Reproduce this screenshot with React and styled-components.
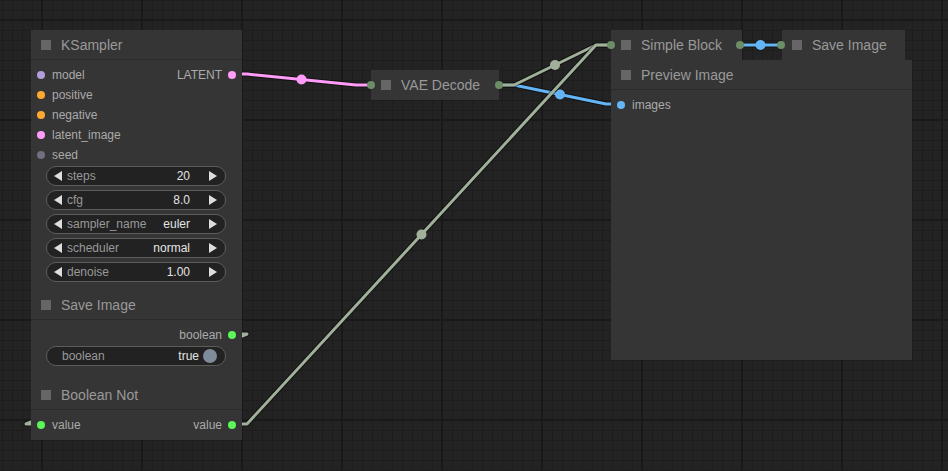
import React from 'react'
import styled, { createGlobalStyle } from 'styled-components'

const GlobalStyle = createGlobalStyle`
  html, body {
    margin: 0;
    padding: 0;
    background: #232323;
    font-family: "Liberation Sans", Arial, sans-serif;
  }
`

const LINK_GREY = '#a0b09a'

const Canvas = styled.div`
  position: relative;
  width: 948px;
  height: 471px;
  overflow: hidden;
  background-color: #232323;
  background-image:
    linear-gradient(to right, #191919 2px, transparent 2px),
    linear-gradient(to bottom, #191919 2px, transparent 2px),
    linear-gradient(to right, #1d1d1d 1px, transparent 1px),
    linear-gradient(to bottom, #1d1d1d 1px, transparent 1px);
  background-size: 100px 100px, 100px 100px, 10px 10px, 10px 10px;
  background-position: 41px 0, 0 19px, 2px 0, 0 0;
`

const LinkLayer = styled.svg`
  position: absolute;
  left: 0;
  top: 0;
  width: 948px;
  height: 471px;
`

const Node = styled.div`
  position: absolute;
  left: ${({ $x }) => $x}px;
  top: ${({ $y }) => $y}px;
  width: ${({ $w }) => $w}px;
  height: ${({ $h }) => $h}px;
  background: #353535;
  display: flex;
  flex-direction: column;
  box-sizing: border-box;
`

const Title = styled.div`
  height: 30px;
  flex-shrink: 0;
  box-sizing: border-box;
  display: flex;
  align-items: center;
  gap: 10px;
  padding-left: 10px;
  font-size: 14px;
  color: #999;
  white-space: nowrap;
  border-bottom: ${({ $collapsed }) => ($collapsed ? 'none' : '1px solid #2b2b2b')};
`

const TitleBox = styled.span`
  width: 10px;
  height: 10px;
  background: #666;
  flex-shrink: 0;
`

const Body = styled.div`
  display: flex;
  flex-direction: column;
  padding-top: 5px;
`

const SlotRow = styled.div`
  height: 20px;
  display: flex;
  align-items: center;
  justify-content: space-between;
  padding: 0 6px;
  font-size: 12px;
  color: #aaa;
`

const Slot = styled.div`
  display: flex;
  align-items: center;
  gap: ${({ $out }) => ($out ? '6px' : '7px')};
`

const Dot = styled.span`
  width: 8px;
  height: 8px;
  border-radius: 50%;
  background: ${({ $color }) => $color};
  flex-shrink: 0;
`

const EdgeDot = styled(Dot)`
  position: absolute;
  top: 11px;
  ${({ $side, $off }) => `${$side}: ${$off}px;`}
`

const WidgetList = styled.div`
  display: flex;
  flex-direction: column;
  gap: 4px;
  margin-top: 1px;
  padding-left: 15px;
`

const Widget = styled.div`
  width: 180px;
  height: 20px;
  box-sizing: border-box;
  border: 1px solid #5c5c5c;
  border-radius: 10px;
  background: #222;
  display: flex;
  align-items: center;
  padding: 0 8px 0 7px;
  font-size: 12px;
`

const Arrow = styled.span`
  width: 0;
  height: 0;
  border-top: 5px solid transparent;
  border-bottom: 5px solid transparent;
  ${({ $dir }) => ($dir === 'left' ? 'border-right: 8px solid #ddd;' : 'border-left: 8px solid #ddd;')}
  flex-shrink: 0;
`

const WidgetLabel = styled.span`
  flex: 1;
  color: #999;
  margin-left: ${({ $pad }) => $pad}px;
`

const WidgetValue = styled.span`
  color: #e4e4e4;
  margin-right: ${({ $gap }) => $gap}px;
`

const Toggle = styled.span`
  width: 14px;
  height: 14px;
  border-radius: 50%;
  background: #7d8b9b;
  margin-left: 4px;
`

const slotColors = {
  MODEL: '#b39ddb',
  CONDITIONING: '#ffa931',
  LATENT: '#ff9cf9',
  INT: '#707080',
  BOOLEAN: '#5cf55c',
  IMAGE: '#64b5f6',
  COLLAPSED: '#6c8e66',
}

const links = [
  { color: LINK_GREY, pts: [[232, 334], [247, 334], [26, 424], [41, 424]] },
  { color: '#ff9cf9', pts: [[232, 74], [247, 74], [356, 85], [371, 85]] },
  { color: '#64b5f6', pts: [[499, 85], [514, 85], [606, 104], [621, 104]] },
  { color: LINK_GREY, pts: [[499, 85], [514, 85], [596, 45], [611, 45]] },
  { color: LINK_GREY, pts: [[232, 424], [247, 424], [596, 45], [611, 45]] },
  { color: '#64b5f6', pts: [[740, 45], [755, 45], [766, 45], [781, 45]] },
]

function Links() {
  return (
    <LinkLayer viewBox="0 0 948 471">
      {links.map((l, i) => {
        const d = l.pts.map(p => p.join(',')).join(' ')
        const mx = (l.pts[1][0] + l.pts[2][0]) / 2
        const my = (l.pts[1][1] + l.pts[2][1]) / 2
        return (
          <g key={i}>
            <polyline points={d} fill="none" stroke="rgba(0,0,0,0.45)" strokeWidth="5" strokeLinejoin="round" />
            <polyline points={d} fill="none" stroke={l.color} strokeWidth="3" strokeLinejoin="round" />
            <circle cx={mx} cy={my} r="5" fill={l.color} />
          </g>
        )
      })}
    </LinkLayer>
  )
}

function NumberWidget({ label, value }) {
  return (
    <Widget>
      <Arrow $dir="left" />
      <WidgetLabel $pad={5}>{label}</WidgetLabel>
      <WidgetValue $gap={19}>{value}</WidgetValue>
      <Arrow $dir="right" />
    </Widget>
  )
}

const ksInputs = [
  ['model', 'MODEL'],
  ['positive', 'CONDITIONING'],
  ['negative', 'CONDITIONING'],
  ['latent_image', 'LATENT'],
  ['seed', 'INT'],
]

const ksWidgets = [
  ['steps', '20'],
  ['cfg', '8.0'],
  ['sampler_name', 'euler'],
  ['scheduler', 'normal'],
  ['denoise', '1.00'],
]

export default function App() {
  return (
    <Canvas>
      <GlobalStyle />
      <Links />

      <Node $x={31} $y={30} $w={211} $h={260}>
        <Title>
          <TitleBox />
          KSampler
        </Title>
        <Body>
          {ksInputs.map(([name, type], i) => (
            <SlotRow key={name}>
              <Slot>
                <Dot $color={slotColors[type]} />
                {name}
              </Slot>
              {i === 0 && (
                <Slot $out>
                  LATENT
                  <Dot $color={slotColors.LATENT} />
                </Slot>
              )}
            </SlotRow>
          ))}
          <WidgetList>
            {ksWidgets.map(([label, value]) => (
              <NumberWidget key={label} label={label} value={value} />
            ))}
          </WidgetList>
        </Body>
      </Node>

      <Node $x={31} $y={290} $w={211} $h={90}>
        <Title>
          <TitleBox />
          Save Image
        </Title>
        <Body>
          <SlotRow>
            <span />
            <Slot $out>
              boolean
              <Dot $color={slotColors.BOOLEAN} />
            </Slot>
          </SlotRow>
          <WidgetList>
            <Widget>
              <WidgetLabel $pad={8}>boolean</WidgetLabel>
              <WidgetValue $gap={0}>true</WidgetValue>
              <Toggle />
            </Widget>
          </WidgetList>
        </Body>
      </Node>

      <Node $x={31} $y={380} $w={211} $h={60}>
        <Title>
          <TitleBox />
          Boolean Not
        </Title>
        <Body>
          <SlotRow>
            <Slot>
              <Dot $color={slotColors.BOOLEAN} />
              value
            </Slot>
            <Slot $out>
              value
              <Dot $color={slotColors.BOOLEAN} />
            </Slot>
          </SlotRow>
        </Body>
      </Node>

      <Node $x={371} $y={70} $w={128} $h={30}>
        <Title $collapsed>
          <TitleBox />
          VAE Decode
        </Title>
        <EdgeDot $color={slotColors.COLLAPSED} $side="left" $off={-4} />
        <EdgeDot $color={slotColors.COLLAPSED} $side="right" $off={-4} />
      </Node>

      <Node $x={611} $y={60} $w={301} $h={300}>
        <Title>
          <TitleBox />
          Preview Image
        </Title>
        <Body>
          <SlotRow>
            <Slot>
              <Dot $color={slotColors.IMAGE} />
              images
            </Slot>
          </SlotRow>
        </Body>
      </Node>

      <Node $x={611} $y={30} $w={131} $h={30}>
        <Title $collapsed>
          <TitleBox />
          Simple Block
        </Title>
        <EdgeDot $color={slotColors.COLLAPSED} $side="left" $off={-4} />
        <EdgeDot $color={slotColors.COLLAPSED} $side="right" $off={-2} />
      </Node>

      <Node $x={782} $y={30} $w={123} $h={30}>
        <Title $collapsed>
          <TitleBox />
          Save Image
        </Title>
        <EdgeDot $color={slotColors.COLLAPSED} $side="left" $off={-5} />
      </Node>
    </Canvas>
  )
}
